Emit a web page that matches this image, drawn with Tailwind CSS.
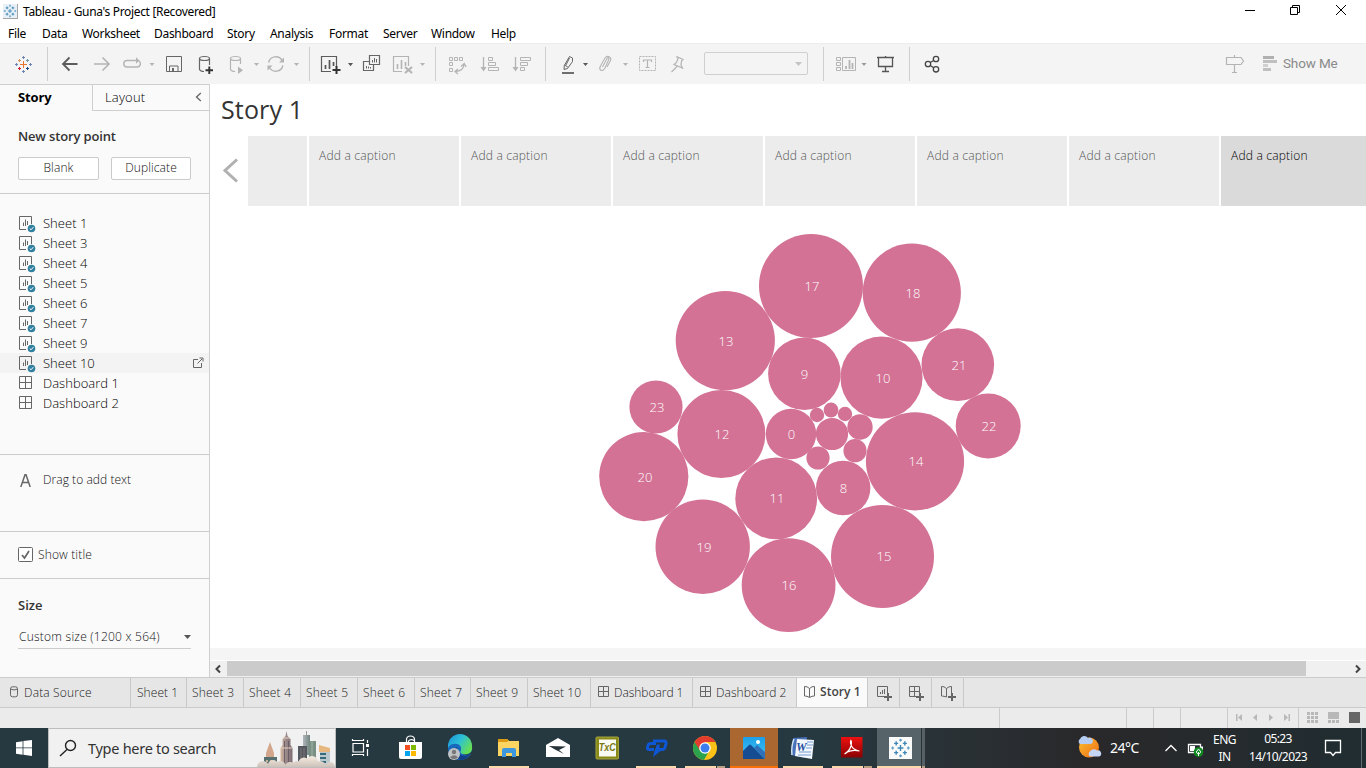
<!DOCTYPE html>
<html lang="en">
<head>
<meta charset="utf-8">
<title>Tableau - Guna's Project</title>
<script src="https://cdn.jsdelivr.net/npm/@tailwindcss/browser@4"></script>
</head>
<body class="w-[1366px] h-[768px] overflow-hidden flex flex-col bg-white font-['Open_Sans','Noto_Sans',sans-serif] text-black">
<svg width="0" height="0" class="absolute">
  <defs>
    <symbol id="sheet" viewBox="0 0 18 18"><path d="M8 13.500H1.500V.5h12V8" fill="none" stroke="#666"/><path d="M5.500 6.500V10M7.500 3.500V10M9.500 5v4" stroke="#666" fill="none"/><circle cx="13.500" cy="12.500" r="3.800" fill="#32809f"/><path d="M11.700 12.500l1.300 1.300 2.300-2.600" stroke="#fff" fill="none"/></symbol>
    <symbol id="dash" viewBox="0 0 14 14"><path d="M.5.500h12v12H.5zM6.500.5v12M.5 6.500h12" fill="none" stroke="#666"/></symbol>
    <symbol id="dashs" viewBox="0 0 12 12"><path d="M.5.5h10v10H.5zM5.500.5v10M.5 5.500h10" fill="none" stroke="#666"/></symbol>
    <symbol id="book" viewBox="0 0 12 12"><path d="M5.500 2.500L3 .8 .5 .5v9.500l2.500.3 2.500 1.200L8 10.300l2.500-.3V.5L8 .8z M5.500 2.500V11" fill="none" stroke="#666"/></symbol>
    <symbol id="star" viewBox="-9 -9 18 18"><path d="M-3 .5H4M.5-3V4" stroke="#e8762c"/><path d="M-5-3.500h3M-3.500-5v3" stroke="#d9955c"/><path d="M3-3.500h3M4.500-5v3" stroke="#7199a6"/><path d="M-5 4.500h3M-3.500 3v3" stroke="#c72035"/><path d="M3 4.500h3M4.500 3v3" stroke="#1f447e"/><path d="M-8 .5h3M-6.500-1v3M6 .5h3M7.500-1v3M-1-6.500h3M.5-8v3M-1 7.500h3M.5 6v3" stroke="#6f86b3"/></symbol>
    <symbol id="bluestar" viewBox="-9 -9 18 18"><path d="M-2.500 0h5M0-2.500v5M-5.500-4h3.500M-3.700-5.700v3.500M2-4h3.500M3.700-5.700v3.500M-5.500 4h3.500M-3.700 2.300v3.500M2 4h3.500M3.700 2.300v3.500" stroke="#3f87b5" stroke-width="1.200"/><path d="M-8 0h2.500M-6.700-1.200v2.500M5.500 0h2.500M6.700-1.200v2.500M-1.200-6.700h2.500M0-8v2.500M-1.200 6.700h2.500M0 5.500v2.500" stroke="#5a9ac2"/></symbol>
  </defs>
</svg>

<!-- title bar -->
<header class="h-[24px] shrink-0 flex items-center text-[12px]">
  <div class="ml-[3px] mt-[-1px] w-[15px] h-[15px] bg-[#e6f0f6] border-r border-b border-[#a5a5a5]"><svg class="w-[14px] h-[14px]"><use href="#bluestar"/></svg></div>
  <span class="ml-[5px] font-['Noto_Sans'] tracking-[-0.33px] whitespace-nowrap">Tableau - Guna's Project [Recovered]</span>
  <svg class="ml-auto" width="146" height="24" viewBox="1220 0 146 24" fill="none" stroke="#000"><path d="M1245 10.500h10M1290.500 7.500h7v7h-7zM1292.500 7V5.500h7v7H1298M1336 5l10 10M1346 5l-10 10"/></svg>
</header>
<nav class="h-[19px] shrink-0 flex items-center font-['Noto_Sans'] text-[12px] tracking-[-0.3px] whitespace-nowrap">
  <span class="ml-[8px] w-[34px]">File</span><span class="w-[40px]">Data</span><span class="w-[72px]">Worksheet</span><span class="w-[73px]">Dashboard</span><span class="w-[43px]">Story</span><span class="w-[59px]">Analysis</span><span class="w-[54px]">Format</span><span class="w-[48px]">Server</span><span class="w-[60px]">Window</span><span>Help</span>
</nav>

<!-- toolbar -->
<div class="h-[41px] shrink-0 flex bg-[#f4f4f4] border-t border-[#ededed]">
  <div class="w-[47px] h-[40px] pl-[14px] pt-[11px]"><svg width="18" height="18"><use href="#star"/></svg></div>
  <div class="w-px h-[34px] mt-[3px] bg-[#cfcfcf]"></div>
  <svg class="shrink-0" width="261" height="40" viewBox="48 44 261 40" fill="none" stroke="#b4b4b4">
    <path d="M77.500 64H63M69.500 57.500L63 64l6.500 6.500" stroke="#5c5c5c" stroke-width="1.800"/>
    <path d="M94 64h15M102.500 57.500L109 64l-6.500 6.500" stroke-width="1.600"/>
    <path d="M134 60.500h-7.500a3.300 3.300 0 000 6.500h11a3.300 3.300 0 001.500-6M132.500 60.500h4.500" stroke-width="1.400"/><path d="M136 57.200v6.600l3.500-3.300z" fill="#b4b4b4" stroke="none"/>
    <path d="M149.500 63h5l-2.500 3z" fill="#b4b4b4" stroke="none"/>
    <path d="M166.500 56.500h15v15h-15zM169.500 71v-5h8.500v5" stroke="#666"/><path d="M172 68h2v3h-2z" fill="#666" stroke="none"/>
    <g stroke="#666" stroke-width="1.200"><ellipse cx="204.500" cy="58.500" rx="5" ry="2"/><path d="M199.500 58.500v11q1 2 4.500 2M209.500 58.500V65"/></g><path d="M205.500 70.300h7.500M209.300 66.500V74" stroke="#333" stroke-width="1.900"/>
    <g stroke-width="1.200"><ellipse cx="235.500" cy="58.500" rx="5" ry="2"/><path d="M230.500 58.500v11q1 2 4.500 2M240.500 58.500V64"/></g><path d="M238 66.500v7.500l5-3.700z" fill="#b4b4b4" stroke="none"/>
    <path d="M254 63h5l-2.500 3z" fill="#b4b4b4" stroke="none"/>
    <path d="M268.600 62.500a7.300 7.300 0 0113.500-2M282.900 65.500a7.300 7.300 0 01-13.500 2" stroke-width="1.400"/><path d="M284 57.500v5h-5zM267.500 70.500v-5h5z" fill="#b4b4b4" stroke="none"/>
    <path d="M294 63h5l-2.500 3z" fill="#b4b4b4" stroke="none"/>
  </svg>
  <div class="w-px h-[34px] mt-[3px] bg-[#cfcfcf]"></div>
  <svg class="shrink-0" width="125" height="40" viewBox="310 44 125 40" fill="none" stroke="#b4b4b4">
    <path d="M331 71.500h-9.500v-15h15V67" stroke="#5c5c5c" stroke-width="1.200"/><path d="M325.500 65v4M329.500 60v9M333.500 62v4" stroke="#555" stroke-width="1.700"/><path d="M332.500 70h8M336.500 66v8" stroke="#333" stroke-width="2"/>
    <path d="M348 63h5l-2.500 3.200z" fill="#555" stroke="none"/>
    <path d="M369.500 55.500h10v9h-10zM369 61.500h-5.500v9h10V65" stroke="#666" stroke-width="1.200"/><path d="M372.500 60v2.500M374.500 58v4.500M376.500 59v3.500M366.500 66v2.500M368.500 66.500v2M370.500 67v1.500" stroke="#666"/>
    <path d="M402 71.500h-8.500v-15h15V66" stroke-width="1.200"/><path d="M397.500 64v5M401.500 60v9M405.500 62v4" stroke-width="1.600"/><path d="M405 67l7 6M412 67l-7 6" stroke-width="2.200"/>
    <path d="M420 63h5l-2.500 3z" fill="#b4b4b4" stroke="none"/>
  </svg>
  <div class="w-px h-[34px] mt-[3px] bg-[#cfcfcf]"></div>
  <svg class="shrink-0" width="109" height="40" viewBox="436 44 109 40" fill="none" stroke="#b4b4b4">
    <path d="M449.500 57.500h3v3h-3zM454.500 57.500h3v3h-3zM459.500 57.500h3v3h-3zM449.500 62.500h3v3h-3zM449.500 68.500h3v3h-3z"/><path d="M464 64q0 7-9 7.500M461 66.500l3.200-3 2 3.500M458 69l-3 2.500 3 2.500" stroke-width="1.300"/>
    <path d="M483.500 57v12" stroke-width="1.300"/><path d="M480.500 67h6l-3 4.500z" fill="#b4b4b4" stroke="none"/><path d="M488.500 57.500h4v3h-4zM488.500 62.500h7v3h-7zM488.500 67.500h10v3h-10z"/>
    <path d="M515.500 57v12" stroke-width="1.300"/><path d="M512.500 67h6l-3 4.500z" fill="#b4b4b4" stroke="none"/><path d="M520.500 57.500h10v3h-10zM520.500 62.500h7v3h-7zM520.500 67.500h4v3h-4z"/>
  </svg>
  <div class="w-px h-[34px] mt-[3px] bg-[#cfcfcf]"></div>
  <svg class="shrink-0" width="158" height="40" viewBox="546 44 158 40" fill="none" stroke="#b4b4b4">
    <path d="M569.500 56.500l3 1.500v3.500l-5 7-3.500 1 .3-4zM564.500 65l3.300 2M569.500 58l-3.500 7" stroke="#666"/><path d="M562 73h12" stroke="#555" stroke-width="1.700"/>
    <path d="M583 63h5l-2.500 3z" fill="#555" stroke="none"/>
    <path d="M602.500 67l4.500-8.500q1.500-1.500 2 .5l-4 9q-2 3.500-4.500 2-1.500-1.500 0-4l4.500-8q2-2.500 4.500-1 2 1 1 3.500l-3.500 6.500" stroke-width="1.100"/>
    <path d="M623 63h5l-2.500 3z" fill="#b4b4b4" stroke="none"/>
    <path d="M639.500 56.500h16v14h-16z" stroke-dasharray="2 1"/><path d="M643.500 62v-2h8v2M647.500 60v7.500M645.500 67.500h4" stroke-width="1.200"/>
    <path d="M676.500 56.500l6.500 3-1.500 1.500-.5 4 1.500 3-8.500-3.500 2.500-2 1.500-4zM677 66.500l-5.500 5.500" stroke-width="1.200"/>
  </svg>
  <div class="shrink-0 w-[104px] h-[23px] mt-[8px] border border-[#cfcfcf] rounded-[2px] flex items-center justify-end"><svg class="mr-[5px]" width="7" height="4"><path d="M0 0h7L3.500 4z" fill="#c4c4c4"/></svg></div>
  <div class="w-px h-[34px] mt-[3px] ml-[15px] bg-[#cfcfcf]"></div>
  <svg class="shrink-0" width="85" height="40" viewBox="824 44 85 40" fill="none" stroke="#b4b4b4">
    <path d="M836.500 57.500h4v3h-4zM836.500 62.500h4v3h-4zM836.500 67.500h4v3h-4zM842.500 57.500h13v13h-13z"/><path d="M846 66v3M849.500 60v9M852.500 63v6" stroke-width="1.800"/>
    <path d="M861.500 63h5l-2.500 3z" fill="#999" stroke="none"/>
    <path d="M877 57.500h17M878.500 58v8.500h14V58M885.500 66.500v5M882 71.500h7M885.500 56v1.500" stroke="#555" stroke-width="1.300"/>
  </svg>
  <div class="w-px h-[34px] mt-[3px] bg-[#cfcfcf]"></div>
  <svg class="shrink-0" width="50" height="40" viewBox="910 44 50 40" fill="none" stroke="#444" stroke-width="1.300"><circle cx="928" cy="64" r="2.700"/><circle cx="936" cy="59" r="2.700"/><circle cx="936" cy="69.300" r="2.700"/><path d="M930.300 62.500l3.400-2M930.300 65.500l3.400 2.200"/></svg>
  <svg class="shrink-0 ml-auto" width="63" height="40" viewBox="1220 44 63 40" fill="none" stroke="#b4b4b4"><path d="M1226.500 57.500h14.500l2.500 3.500-2.500 3.500h-14.500zM1234.500 55v2M1234.500 65v7M1232 72.500h5" stroke-width="1.200"/><g stroke="none" fill="#b0b0b0"><path d="M1263 56h11v3h-11z"/><path d="M1263 60h14v3h-14zM1263 68h8v3h-8z" fill="#c0c0c0"/><path d="M1263 64h5v3h-5z" fill="#d0d0d0"/></g></svg>
  <span class="w-[83px] h-[40px] leading-[39px] text-[13.500px] tracking-[-0.15px] text-[#8a8a8a] whitespace-nowrap font-['Roboto']">Show Me</span>
</div>

<main class="h-[593px] shrink-0 flex">
  <!-- side panel -->
  <aside class="w-[210px] shrink-0 bg-[#fafafa] border-r border-t border-[#cfcfcf] flex flex-col text-black font-light">
    <div class="flex h-[26px] text-[13px]">
      <div class="w-[92px] pl-[18px] leading-[25px] font-bold text-black tracking-[-0.1px]">Story</div>
      <div class="flex-1 border-l border-b border-[#cfcfcf] flex justify-between pl-[12px] pr-[7px] leading-[25px] tracking-[0.2px]"><span>Layout</span><svg class="mt-[7px]" width="7" height="10"><path d="M5.800 1L1.500 5l4.300 4" fill="none" stroke="#666" stroke-width="1.300"/></svg></div>
    </div>
    <section class="h-[83px] border-b border-[#cbcbcb] pl-[18px] pt-[15px]">
      <h2 class="text-[13px] leading-[20px] font-semibold text-[#333] whitespace-nowrap tracking-[-0.15px]">New story point</h2>
      <div class="flex gap-[12px] mt-[11px] text-[12px] text-center text-[#111] tracking-[0.1px]">
        <div class="w-[81px] h-[23px] bg-white border border-[#cbcbcb] rounded-[2px] leading-[20px]">Blank</div>
        <div class="w-[80px] h-[23px] bg-white border border-[#cbcbcb] rounded-[2px] leading-[20px]">Duplicate</div>
      </div>
    </section>
    <section class="h-[261px] border-b border-[#cbcbcb] pt-[19px] text-[13px] leading-[20px] tracking-[0.02px] whitespace-nowrap">
      <div class="h-[20px] flex pl-[18px]"><svg class="mt-[3px] mr-[7px]" width="18" height="18"><use href="#sheet"/></svg>Sheet 1</div>
      <div class="h-[20px] flex pl-[18px]"><svg class="mt-[3px] mr-[7px]" width="18" height="18"><use href="#sheet"/></svg>Sheet 3</div>
      <div class="h-[20px] flex pl-[18px]"><svg class="mt-[3px] mr-[7px]" width="18" height="18"><use href="#sheet"/></svg>Sheet 4</div>
      <div class="h-[20px] flex pl-[18px]"><svg class="mt-[3px] mr-[7px]" width="18" height="18"><use href="#sheet"/></svg>Sheet 5</div>
      <div class="h-[20px] flex pl-[18px]"><svg class="mt-[3px] mr-[7px]" width="18" height="18"><use href="#sheet"/></svg>Sheet 6</div>
      <div class="h-[20px] flex pl-[18px]"><svg class="mt-[3px] mr-[7px]" width="18" height="18"><use href="#sheet"/></svg>Sheet 7</div>
      <div class="h-[20px] flex pl-[18px]"><svg class="mt-[3px] mr-[7px]" width="18" height="18"><use href="#sheet"/></svg>Sheet 9</div>
      <div class="h-[20px] flex pl-[18px] bg-[#f3f3f3]"><svg class="mt-[3px] mr-[7px]" width="18" height="18"><use href="#sheet"/></svg>Sheet 10<svg class="ml-auto mr-[5px] mt-[4px]" width="11" height="11" fill="none" stroke="#666"><path d="M5 2.500H.5v8h8V6M4.500 6.500L9 2M6.500 1h3.500v3.500" /></svg></div>
      <div class="h-[20px] flex pl-[19px]"><svg class="mt-[3px] mr-[10px]" width="14" height="14"><use href="#dash"/></svg>Dashboard 1</div>
      <div class="h-[20px] flex pl-[19px]"><svg class="mt-[3px] mr-[10px]" width="14" height="14"><use href="#dash"/></svg>Dashboard 2</div>
    </section>
    <section class="h-[77px] border-b border-[#cbcbcb] flex pl-[20px] pt-[15px] leading-[20px] text-[12px] text-[#111] whitespace-nowrap tracking-[0.05px]"><svg class="mt-[4px] mr-[12px]" width="11" height="13" fill="none" stroke="#666" stroke-width="1.500"><path d="M.8 13L5 .8h1L10.200 13M2.500 8.500h6"/></svg>Drag to add text</section>
    <section class="h-[47px] border-b border-[#cbcbcb] flex pl-[18px] pt-[13px] leading-[20px] text-[12px] text-[#111] whitespace-nowrap tracking-[0.15px]"><svg class="mt-[2px] mr-[5px]" width="15" height="15" fill="none" stroke="#666"><rect x=".5" y=".5" width="14" height="14" rx="1" fill="#fff"/><path d="M4 8l2.500 3L11 4" stroke-width="1.700"/></svg>Show title</section>
    <section class="pl-[18px] pt-[16px]">
      <h2 class="text-[13px] leading-[20px] font-semibold text-[#333]">Size</h2>
      <div class="w-[173px] h-[23px] mt-[11px] border-b border-[#cbcbcb] pl-px pr-0 flex items-center justify-between text-[12px] text-[#111] whitespace-nowrap tracking-[0.24px]"><span class="mt-[-1px]">Custom size (1200 x 564)</span><svg width="7" height="4"><path d="M0 0h7L3.500 4z" fill="#555"/></svg></div>
    </section>
  </aside>

  <!-- story canvas -->
  <div class="flex-1 min-w-0 flex flex-col">
    <h1 class="h-[52px] pl-[11px] leading-[51px] text-[25px] tracking-[0.15px] text-[#333] whitespace-nowrap">Story 1</h1>
    <div class="h-[70px] shrink-0 flex gap-[2px] text-[12px] font-light text-[#555] leading-[16px] whitespace-nowrap tracking-[0.2px]">
      <svg class="shrink-0" width="36" height="70"><path d="M27 23.500L15 34.500 27 45.500" fill="none" stroke="#b0b0b0" stroke-width="3"/></svg>
      <div class="w-[59px] shrink-0 bg-[#ececec]"></div>
      <div class="w-[150px] shrink-0 bg-[#ececec] pl-[10px] pt-[12px]">Add a caption</div>
      <div class="w-[150px] shrink-0 bg-[#ececec] pl-[10px] pt-[12px]">Add a caption</div>
      <div class="w-[150px] shrink-0 bg-[#ececec] pl-[10px] pt-[12px]">Add a caption</div>
      <div class="w-[150px] shrink-0 bg-[#ececec] pl-[10px] pt-[12px]">Add a caption</div>
      <div class="w-[150px] shrink-0 bg-[#ececec] pl-[10px] pt-[12px]">Add a caption</div>
      <div class="w-[150px] shrink-0 bg-[#ececec] pl-[10px] pt-[12px]">Add a caption</div>
      <div class="flex-1 bg-[#dadada] pl-[10px] pt-[12px] text-black">Add a caption</div>
    </div>
    <svg class="shrink-0" width="1156" height="442" viewBox="210 206 1156 442">
      <g fill="#d37295">
        <circle cx="811" cy="286" r="52"/><circle cx="911.800" cy="292.700" r="49.100"/><circle cx="725.300" cy="340.600" r="49.600"/><circle cx="804.400" cy="373.700" r="36.300"/><circle cx="881.500" cy="377.600" r="41.100"/><circle cx="957.800" cy="364.600" r="36.300"/><circle cx="988.200" cy="426" r="32.500"/><circle cx="656" cy="407" r="26.600"/><circle cx="721.400" cy="434" r="44"/><circle cx="791" cy="434" r="25.200"/><circle cx="643.800" cy="476.600" r="44.600"/><circle cx="776.200" cy="498.400" r="40.900"/><circle cx="843.200" cy="488" r="27.200"/><circle cx="915" cy="461.300" r="49.100"/><circle cx="882.500" cy="556.400" r="51.500"/><circle cx="788.600" cy="585.100" r="46.900"/><circle cx="702.700" cy="546.700" r="47.200"/>
        <circle cx="817" cy="415" r="7.200"/><circle cx="831" cy="410" r="7.400"/><circle cx="845" cy="414" r="7.200"/><circle cx="860" cy="427" r="12.700"/><circle cx="832" cy="434" r="16.100"/><circle cx="855" cy="450.700" r="11.600"/><circle cx="818" cy="458" r="11.600"/>
      </g>
      <g fill="#fff" font-size="13" font-weight="300" text-anchor="middle">
        <text x="812" y="291">17</text><text x="913" y="298">18</text><text x="726" y="346">13</text><text x="804.500" y="379">9</text><text x="883" y="383">10</text><text x="959" y="370">21</text><text x="989" y="431">22</text><text x="657" y="412">23</text><text x="722" y="439">12</text><text x="791.500" y="439">0</text><text x="645" y="482">20</text><text x="777" y="503">11</text><text x="843.500" y="493">8</text><text x="916" y="466">14</text><text x="884" y="561">15</text><text x="789" y="590">16</text><text x="704" y="552">19</text>
      </g>
    </svg>
    <div class="h-[12px] bg-[#f5f5f5]"></div>
    <div class="h-[17px] bg-[#f0f0f0] border-t border-white flex justify-between items-start">
      <svg width="17" height="16"><path d="M10 4.500L6.500 8l3.500 3.500" fill="none" stroke="#444" stroke-width="2"/></svg>
      <div class="w-[1079px] h-[15px] bg-[#cbcbcb]"></div>
      <svg class="ml-auto" width="17" height="16"><path d="M7 4.500L10.500 8 7 11.500" fill="none" stroke="#444" stroke-width="2"/></svg>
    </div>
  </div>
</main>

<!-- sheet tabs -->
<div class="h-[31px] shrink-0 flex bg-[#e6e6e6] border-y border-[#cbcbcb] text-[12px] leading-[29px] font-light text-[#222] whitespace-nowrap tracking-[0.07px]">
  <div class="w-[131px] flex border-r border-[#c8c8c8] pl-[10px] tracking-[0.16px]"><svg class="mt-[8px] mr-[6px]" width="8" height="12" fill="none" stroke="#666"><rect x=".5" y=".8" width="7" height="10" rx="2"/><path d="M.5 3q3.500 2 7 0"/></svg>Data Source</div>
  <div class="w-[56px] border-r border-[#c8c8c8] pl-[6px]">Sheet 1</div>
  <div class="w-[57px] border-r border-[#c8c8c8] pl-[5px] tracking-[0.2px]">Sheet 3</div>
  <div class="w-[57px] border-r border-[#c8c8c8] pl-[5px] tracking-[0.2px]">Sheet 4</div>
  <div class="w-[57px] border-r border-[#c8c8c8] pl-[5px] tracking-[0.2px]">Sheet 5</div>
  <div class="w-[57px] border-r border-[#c8c8c8] pl-[5px] tracking-[0.2px]">Sheet 6</div>
  <div class="w-[56px] border-r border-[#c8c8c8] pl-[5px] tracking-[0.2px]">Sheet 7</div>
  <div class="w-[57px] border-r border-[#c8c8c8] pl-[5px] tracking-[0.2px]">Sheet 9</div>
  <div class="w-[63px] border-r border-[#c8c8c8] pl-[5px]">Sheet 10</div>
  <div class="w-[102px] border-r border-[#c8c8c8] pl-[7px] flex tracking-[-0.04px]"><svg class="mt-[8px] mr-[4px]" width="12" height="12"><use href="#dashs"/></svg>Dashboard 1</div>
  <div class="w-[104px] border-r border-[#c8c8c8] pl-[7px] flex tracking-[0.06px]"><svg class="mt-[8px] mr-[4px]" width="12" height="12"><use href="#dashs"/></svg>Dashboard 2</div>
  <div class="w-[71px] border-r border-[#c8c8c8] pl-[7px] flex bg-[#fafafa] font-semibold text-[#444] leading-[28px] tracking-[0.05px]"><svg class="mt-[8px] mr-[4px]" width="12" height="12"><use href="#book"/></svg>Story 1</div>
  <div class="w-[32px] border-r border-[#c8c8c8] pl-[9px] pt-[8px]"><svg width="16" height="16" fill="none" stroke="#666"><path d="M8 10.500H.5V.5h10V8M3.500 6v2M5.500 4v4M7.500 3v5"/><path d="M7 11h8M11 7v8" stroke-width="2"/></svg></div>
  <div class="w-[32px] border-r border-[#c8c8c8] pl-[9px] pt-[8px]"><svg width="16" height="16" fill="none" stroke="#666"><path d="M8 10.500H.5V.5h10V8M5.500.5v10M.5 5.500h10"/><path d="M7 11h8M11 7v8" stroke-width="2"/></svg></div>
  <div class="w-[32px] border-r border-[#c8c8c8] pl-[9px] pt-[8px]"><svg width="16" height="16" fill="none" stroke="#666"><path d="M5.500 11L3 10.300.5 10V.5L3 .8l2.500 1.700L8 .8l2.500-.3V7M5.500 2.500V11"/><path d="M7 11h8M11 7v8" stroke-width="2"/></svg></div>
</div>

<!-- status bar -->
<div class="h-[20px] shrink-0 flex bg-[#ebebeb]">
  <div class="w-[1000px] border-r border-[#cbcbcb]"></div><div class="w-[127px] border-r border-[#cbcbcb]"></div><div class="w-[27px] border-r border-[#cbcbcb]"></div><div class="w-[27px] border-r border-[#cbcbcb]"></div><div class="w-[47px] border-r border-[#cbcbcb]"></div>
  <div class="w-[71px] border-r border-[#cbcbcb]"><svg width="70" height="20" viewBox="1228 708 70 20" fill="#b8b8b8"><path d="M1236 714h1.500v7h-1.500zM1242 714v7l-4-3.500zM1257 714v7l-4-3.500zM1269 714v7l4-3.500zM1284 714v7l4-3.500zM1288.500 714h1.500v7h-1.500z"/></svg></div>
  <svg width="67" height="20" viewBox="1299 708 67 20" fill="#b8b8b8"><path d="M1307 712h3v3h-3zM1311 712h3v3h-3zM1315 712h3v3h-3zM1307 716h3v3h-3zM1311 716h3v3h-3zM1315 716h3v3h-3zM1307 720h3v3h-3zM1311 720h3v3h-3zM1315 720h3v3h-3zM1328 712h11v7h-11zM1328 720h3v3h-3zM1332 720h3v3h-3zM1336 720h3v3h-3z"/><path d="M1349 712h11v11h-11z" fill="#666"/></svg>
</div>

<!-- taskbar -->
<footer class="h-[40px] shrink-0 flex bg-linear-to-r from-[#273940] via-[#29282a] to-[#202d31] from-60% via-80% text-white whitespace-nowrap">
  <div class="w-[48px] pt-[12px] pl-[16px]"><svg width="16" height="16" fill="#fff"><path d="M0 2.200L6.600 1.200v6.200H0zM7.400 1.100L16 0v7.400H7.400zM0 8.300h6.600v6.400L0 13.800zM7.400 8.300H16V16l-8.600-1.200z"/></svg></div>
  <div class="w-[288px] h-[40px] bg-[#f1f1f1] border border-[#bdbdbd] flex text-[#333] overflow-hidden">
    <svg class="mt-[10px] ml-[10px]" width="18" height="18" fill="none" stroke="#222" stroke-width="1.400"><circle cx="11.500" cy="6.500" r="5"/><path d="M8 10.500L1 17"/></svg>
    <span class="ml-[11px] leading-[38px] text-[14.500px] font-['Noto_Sans'] tracking-[-0.28px]">Type here to search</span>
    <svg class="ml-auto" width="78" height="38" viewBox="257 729 78 38">
      <defs>
        <linearGradient id="tower"><stop stop-color="#d9b9a0"/><stop offset=".45" stop-color="#9a8a8c"/><stop offset="1" stop-color="#7d6d72"/></linearGradient>
        <linearGradient id="glass"><stop stop-color="#b0b6bb"/><stop offset="1" stop-color="#6f857f"/></linearGradient>
        <linearGradient id="cl" gradientUnits="userSpaceOnUse" x1="0" y1="757" x2="0" y2="768"><stop stop-color="#f3e8dc"/><stop offset="1" stop-color="#c9beb6"/></linearGradient>
      </defs>
      <path d="M270 742l4 11v4h2v10h-11v-10h1v-4z" fill="#d3a68c"/><path d="M264 757h13v10h-13z" fill="#55706f"/><path d="M266 760h2v2h-2zM270 760h2v2h-2zM266 764h2v2h-2z" fill="#c4b39c"/>
      <path d="M286.500 731l1 5 3 3v6l2 3v19h-12v-19l2-3v-6l3-3z" fill="url(#tower)"/><path d="M284.500 741v25M288.500 741v25" stroke="#5f5360" stroke-width=".8"/><path d="M283 738h7M281 748h11" stroke="#e8d3c2"/>
      <path d="M303 735h7v20h-7z" fill="url(#glass)"/><path d="M306.500 731v5" stroke="#999"/><path d="M309 741h7v18h-7z" fill="#7b9085"/><path d="M312 741v18" stroke="#a2b3a7"/>
      <path d="M298 746h9v18h-9z" fill="#545960"/><path d="M301 748v14M304 748v14" stroke="#7d7476"/>
      <path d="M320 746l10 3v18h-10z" fill="#b9c8cc"/><path d="M319 745l11 3v4h-11z" fill="#e6b880"/><path d="M320 754h6M320 758h6M320 762h6" stroke="#376a79" stroke-width="2"/>
      <g fill="url(#cl)"><circle cx="263" cy="767" r="6"/><circle cx="273" cy="765" r="5"/><circle cx="280" cy="767" r="6"/><circle cx="290" cy="767" r="5"/><circle cx="297" cy="766" r="5"/><circle cx="304" cy="763" r="5.500"/><circle cx="312" cy="762" r="6"/><circle cx="320" cy="767" r="6"/><circle cx="330" cy="767" r="5"/><path d="M298 763h22v5h-22z"/></g>
    </svg>
  </div>
  <svg class="shrink-0" width="590" height="40" viewBox="336 728 590 40">
    <defs>
      <linearGradient id="edge" x2="1" y2=".6"><stop stop-color="#1b8fd8"/><stop offset=".5" stop-color="#2cc0d8"/><stop offset="1" stop-color="#66df55"/></linearGradient>
      <linearGradient id="pdf" y2="1" x2="0"><stop stop-color="#ee1010"/><stop offset="1" stop-color="#8a0202"/></linearGradient>
      <linearGradient id="sky" y2="1" x2="0"><stop stop-color="#1c9fe8"/><stop offset="1" stop-color="#42c8f4"/></linearGradient>
    </defs>
    <path d="M353 743.500h10.500v8.500H353zM352.500 739v1.500h11V739M352.500 756v-1.500h11v1.500M367.500 740v3M367.500 749v7" fill="none" stroke="#fff" stroke-width="1.200"/><path d="M366 744h3v3h-3z" fill="#fff"/>
    <path d="M406.500 742v-2.500a4 3.500 0 018 0v2.500M408.500 742v-1a3.500 3 0 016 0" fill="none" stroke="#fff" stroke-width="1.200"/><path d="M399 742h23v15q0 2-2 2h-19q-2 0-2-2z" fill="#fff"/><path d="M405 745h5v5h-5z" fill="#f25022"/><path d="M411 745h5v5h-5z" fill="#7fba00"/><path d="M405 751h5v5h-5z" fill="#00a4ef"/><path d="M411 751h5v5h-5z" fill="#ffb900"/>
    <path d="M448 748a12 12 0 0124-1q1 6-5 7h-4q5 2 8-.500-3 6.500-11 6.500a12 12 0 01-12-12z" fill="#1769bc"/><path d="M448 746a12 12 0 0124 0c1 7-4 9-9 8q-4-1-2-4c1-3-2-7-7-6q-4 0-6 4z" fill="url(#edge)"/><path d="M457 747q-1 6 4 8 5 2 9-1-3 5-9 6-7-2-7-8 0-4 3-5z" fill="#123f86"/><circle cx="454" cy="754" r="6" fill="#bfc3c6"/><circle cx="454" cy="752" r="2.200" fill="#777"/><path d="M450 757.500q4-4.500 8 0-4 3-8 0z" fill="#777"/>
    <path d="M498 739h9l2 2h10v15h-21z" fill="#fcd462"/><path d="M498 739h9l2 1.500-2 1.500h-9z" fill="#dd9b13"/><path d="M502 757v-7q0-2 2-2h10q2 0 2 2v7h-4v-4h-6v4z" fill="#3d97df"/>
    <path d="M546 745l12-7 12 7v12h-24z" fill="#fff"/><path d="M549 746l17 .5-7 3.500 5 4-9-4.500z" fill="#263339"/>
    <rect x="596" y="737" width="22.500" height="22" rx="1" fill="#8a8a18" stroke="#a5a440"/><path d="M599 739.500h17v17h-17z" fill="#fafaf4"/>
    <text x="607.300" y="750.500" text-anchor="middle" font-size="10" font-weight="bold" font-style="italic" fill="#7a7915" font-family="Liberation Sans" textLength="17" lengthAdjust="spacingAndGlyphs">TxC</text>
    <path d="M656 743.500h-5q-2.500 0-3 2l-.5 2q-.5 2 1.500 2h5" fill="none" stroke="#0d57d6" stroke-width="3"/><path d="M653 741h11q2.500 0 2 2.500l-1 4q-.5 2-3 2h-3" fill="none" stroke="#0d57d6" stroke-width="3"/><path d="M657 744.500h3l-1.500 6.500h2l-7.500 6 1.500-6z" fill="#0d57d6"/>
    <circle cx="705" cy="748" r="12" fill="#fbc116"/><path d="M694.600 742A12 12 0 00704 760l5-9-8-1z" fill="#2ba24c"/><path d="M694.600 742A12 12 0 01715.400 742H705v6l-5 2.500z" fill="#e33b2e"/><circle cx="705" cy="748" r="5.800" fill="#fff"/><circle cx="705" cy="748" r="4.500" fill="#3b7ded"/>
    <path d="M730 728h48v40h-48z" fill="#aa6830"/><rect x="743" y="737" width="22" height="22" rx="1" fill="url(#sky)"/><path d="M743 751l6-6q1-1 2 0l14 14h-22z" fill="#164d92"/><path d="M754 748l3-3 8 7v7z" fill="#2f70b8"/><circle cx="758" cy="742" r="2" fill="#fff"/>
    <path d="M793 738l14-1-2 21-14-3z" fill="#4771b9"/><path d="M797 739l17 1-2 19-17-3z" fill="#f4f7fb"/><path d="M807 742h6M807 745h6M806 748h6M799 752h12M798 755h13" stroke="#7599d4"/><text x="796" y="751" font-size="12" font-weight="bold" font-style="italic" fill="#234fa1" font-family="Liberation Serif">W</text><path d="M794 739q-3 7-2 16" fill="none" stroke="#cfe1f5" stroke-width="1.500"/>
    <rect x="841" y="737" width="21.500" height="20.500" fill="url(#pdf)"/><path d="M844.500 754q5-3 6.500-8 1-4.500-.2-5.500-1 2 .7 5.500 2 4 8 5-7-1.500-12 1" fill="none" stroke="#fff" stroke-width="1.200"/>
    <path d="M877 728h44v40h-44z" fill="#56646a"/><path d="M922 728h3v40h-3z" fill="#566065"/><rect x="889" y="737" width="23" height="22" fill="#fafafa"/><use href="#bluestar" x="890" y="737.500" width="21" height="21"/>
    <path d="M489 766h40v2h-40zM636 766h40v2h-40zM685 766h31v2h-31zM783 766h40v2h-40zM832 766h31v2h-31zM877 766h44v2h-44z" fill="#fcd8ac"/><path d="M717 766h8v2h-8zM864 766h8v2h-8zM922 766h3v2h-3z" fill="#bb9f82"/><path d="M730 766h48v2h-48z" fill="#f7700a"/>
  </svg>
  <svg class="ml-[151px] shrink-0" width="26" height="40" viewBox="1078 728 26 40"><defs><linearGradient id="sun" x2="1" y2="1"><stop stop-color="#fbc02d"/><stop offset="1" stop-color="#ef6c1a"/></linearGradient></defs><circle cx="1090" cy="747.500" r="10" fill="url(#sun)"/><path d="M1081 744a3 3 0 010-5 4.500 4.500 0 018-1 3 3 0 013 6z" fill="#b5cdf2"/><path d="M1091 756.500a3 3 0 010-5 4.500 4.500 0 017-1 3 3 0 012 6z" fill="#c5d6f5"/></svg>
  <span class="ml-[7px] w-[54px] leading-[39px] text-[14px] font-['Noto_Sans'] tracking-[-0.5px]">24°C</span>
  <svg class="shrink-0" width="44" height="40" viewBox="1164 728 44 40" fill="none" stroke="#fff"><path d="M1165.500 751l5.500-5.500 5.500 5.500" stroke-width="1.300"/><path d="M1188.500 744.500h12v8h-12z" stroke-width="1.300"/><path d="M1190 746h5v5h-5z" fill="#fff" stroke="none"/><path d="M1201 746.500h2v4h-2z" fill="#fff" stroke="none"/><circle cx="1198.500" cy="752" r="4.800" fill="#128a24" stroke="none"/><path d="M1198.500 749l2.300 3-2.300 2.500-2.300-2.500zM1198.500 752v4" stroke-width=".9"/></svg>
  <div class="w-[33px] pt-[3px] text-center text-[12px] leading-[17px] font-['Noto_Sans'] tracking-[-0.5px]">ENG<br>IN</div>
  <div class="w-[73px] pt-[2px] pl-px text-center text-[12px] leading-[18px] font-['Noto_Sans'] tracking-[-0.6px]">05:23<br>14/10/2023</div>
  <svg class="shrink-0" width="52" height="40" viewBox="1314 728 52 40" fill="none" stroke="#fff"><path d="M1325.500 740.500h15v12h-5l-2.500 3-2.500-3h-5z" stroke-width="1.300"/><path d="M1361.500 728v40" stroke="#5f6b70"/></svg>
</footer>
</body>
</html>
